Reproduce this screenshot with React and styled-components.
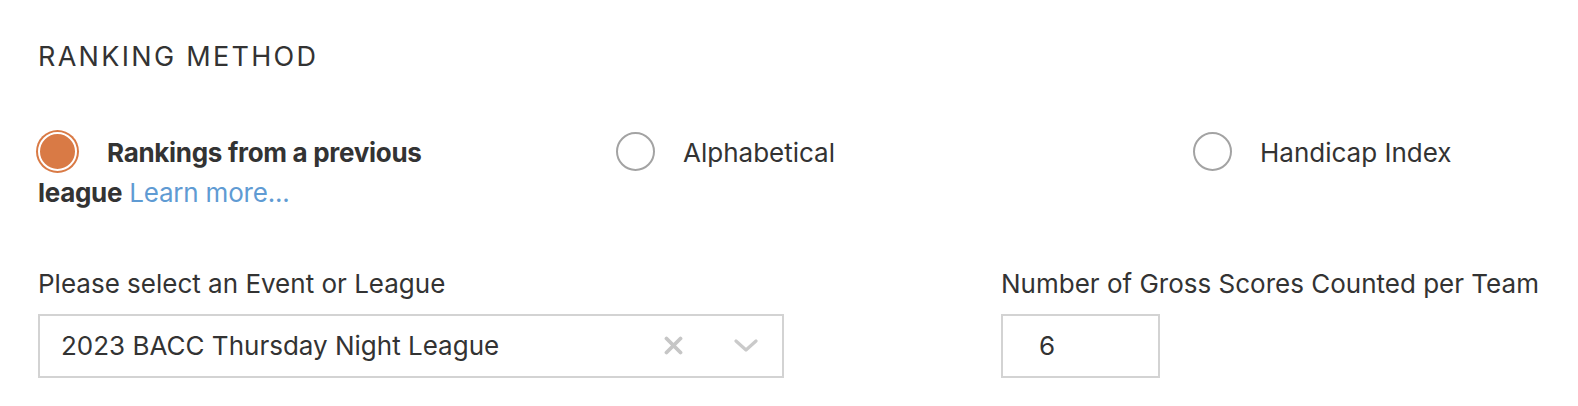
import React from "react";
import styled, { createGlobalStyle } from "styled-components";

const Global = createGlobalStyle`
  html, body { margin: 0; padding: 0; background: #fff; }
  body { font-family: Inter, "Noto Sans", sans-serif; color: #333; }
`;

const Page = styled.div`
  padding: 41px 0 0 38px;
  width: 1578px;
  box-sizing: border-box;
  overflow: hidden;
`;

const Title = styled.h2`
  margin: 0;
  font-size: 27px;
  line-height: 32px;
  font-weight: 400;
  letter-spacing: 2.3px;
  color: #333;
`;

const RadioRow = styled.div`
  display: grid;
  grid-template-columns: 578px 577px 1fr;
  margin-top: 59px;
`;

const Option = styled.label`
  display: block;
  max-width: 440px;
  font-size: 26px;
  line-height: 40px;
  color: #333;
  cursor: pointer;
`;

const Circle = styled.span`
  display: inline-block;
  vertical-align: -9.5px;
  box-sizing: border-box;
  width: 39px;
  height: 39px;
  border-radius: 50%;
  margin-right: ${(p) => (p.$checked ? "30px" : "28px")};
  ${(p) =>
    p.$checked
      ? `background:#d97a45; border:2px solid #fff; box-shadow:0 0 0 2px #d97a45;`
      : `background:#fff; border:2px solid #a3a3a3;`}
`;

const OptionText = styled.span`
  font-weight: ${(p) => (p.$bold ? 700 : 400)};
  letter-spacing: ${(p) => (p.$bold ? "-0.3px" : "0")};
`;

const Link = styled.a`
  color: #5f9bd3;
  text-decoration: none;
  margin-left: 7px;
  letter-spacing: -0.2px;
`;

const FieldRow = styled.div`
  display: grid;
  grid-template-columns: 963px 1fr;
  margin-top: 55px;
`;

const Field = styled.div`
  display: flex;
  flex-direction: column;
`;

const Label = styled.div`
  font-size: 26px;
  line-height: 32px;
  color: #333;
  margin-bottom: 14px;
`;

const Select = styled.div`
  box-sizing: border-box;
  width: 746px;
  height: 64px;
  border: 2px solid #d3d3d3;
  display: flex;
  align-items: center;
  padding: 0 24px 0 21px;
  font-size: 26px;
  line-height: 32px;
  color: #333;
`;

const SelectValue = styled.span`
  flex: 1;
`;

const IconBtn = styled.span`
  display: flex;
  align-items: center;
  justify-content: center;
  margin-left: ${(p) => p.$gap || 0}px;
`;

const NumberBox = styled.div`
  box-sizing: border-box;
  width: 159px;
  height: 64px;
  border: 2px solid #d3d3d3;
  display: flex;
  align-items: center;
  padding-left: 36px;
  font-size: 26px;
  line-height: 32px;
  color: #333;
`;

export default function App() {
  return (
    <Page>
      <Global />
      <Title>RANKING METHOD</Title>
      <RadioRow>
        <Option>
          <Circle $checked />
          <OptionText $bold>Rankings from a previous league</OptionText>
          <Link href="#">Learn more...</Link>
        </Option>
        <Option>
          <Circle />
          <OptionText>Alphabetical</OptionText>
        </Option>
        <Option>
          <Circle />
          <OptionText>Handicap Index</OptionText>
        </Option>
      </RadioRow>
      <FieldRow>
        <Field>
          <Label>Please select an Event or League</Label>
          <Select>
            <SelectValue>2023 BACC Thursday Night League</SelectValue>
            <IconBtn>
              <svg width="19" height="19" viewBox="0 0 19 19">
                <path d="M2.5 2.5 L16.5 16.5 M16.5 2.5 L2.5 16.5" stroke="#c6c6c6" strokeWidth="3.8" strokeLinecap="round" />
              </svg>
            </IconBtn>
            <IconBtn $gap={51}>
              <svg width="24" height="13" viewBox="0 0 24 13">
                <path d="M2 2 L12 11 L22 2" stroke="#cacaca" strokeWidth="3.2" fill="none" strokeLinecap="round" strokeLinejoin="round" />
              </svg>
            </IconBtn>
          </Select>
        </Field>
        <Field>
          <Label>Number of Gross Scores Counted per Team</Label>
          <NumberBox>6</NumberBox>
        </Field>
      </FieldRow>
    </Page>
  );
}
